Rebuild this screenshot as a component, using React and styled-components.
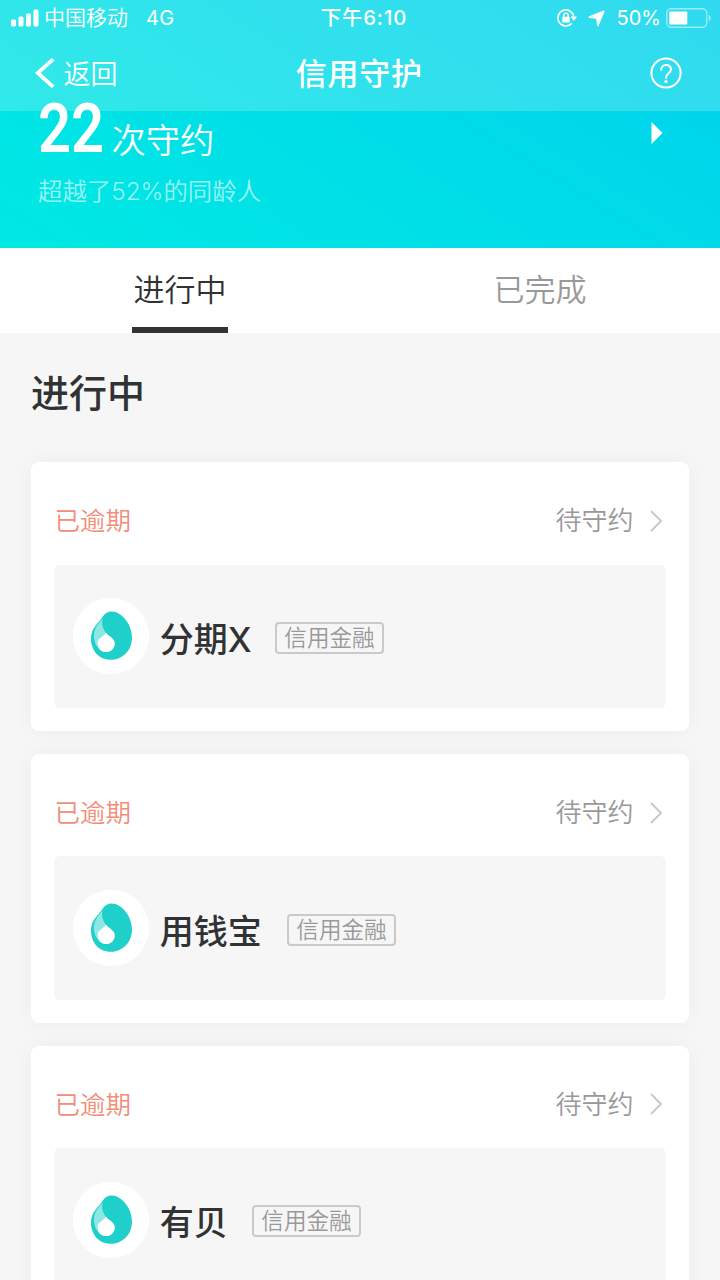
import React from 'react';
import styled, { createGlobalStyle } from 'styled-components';

const GlobalStyle = createGlobalStyle`
  * { box-sizing: border-box; }
  body {
    margin: 0;
    background: #f6f6f6;
    font-family: 'Noto Sans CJK SC', sans-serif;
    color: #303233;
  }
`;

const Screen = styled.div`
  width: 720px;
  height: 1280px;
  overflow: hidden;
  background: #f6f6f6;
`;

const Hero = styled.header`
  height: 248px;
  color: #fff;
  background: linear-gradient(32deg, #00e9e3 0%, #00dde8 50%, #00d1ec 100%);
`;

const TopBar = styled.div`
  height: 111px;
  background: rgba(255, 255, 255, 0.19);
`;

const StatusBar = styled.div`
  display: grid;
  grid-template-columns: 1fr auto 1fr;
  align-items: center;
  height: 36px;
  padding: 0 9px 0 11px;
`;

const StatusGroup = styled.div`
  display: flex;
  align-items: center;
  justify-content: ${(p) => (p.$end ? 'flex-end' : 'flex-start')};
`;

const StatusText = styled.span`
  margin-left: ${(p) => p.$gap || 0}px;
  font-family: Inter, 'Noto Sans CJK SC', sans-serif;
  font-size: ${(p) => p.$size || 20}px;
  font-weight: ${(p) => p.$weight || 400};
  letter-spacing: ${(p) => p.$tracking || 0}px;
  line-height: 36px;
  white-space: nowrap;
`;

const Clock = styled(StatusText)`
  padding-left: 6px;
`;

const LocationArrow = styled.svg`
  margin-left: 11px;
`;

const Battery = styled.svg`
  margin-left: 5px;
`;

const NavBar = styled.nav`
  display: grid;
  grid-template-columns: 1fr auto 1fr;
  align-items: center;
  height: 73px;
  padding: 0 38.5px 0 35px;
`;

const Back = styled.div`
  display: flex;
  align-items: center;
  gap: 8.5px;
  font-size: 27px;
  font-weight: 350;
  line-height: 73px;
`;

const NavTitle = styled.h1`
  margin: 0;
  padding-left: 2px;
  font-size: 31px;
  font-weight: 500;
  letter-spacing: 0.8px;
  line-height: 70px;
  height: 71px;
`;

const Help = styled.svg`
  justify-self: end;
`;

const Summary = styled.section`
  display: flex;
  justify-content: space-between;
  margin-top: -12px;
  padding: 0 57px 0 38px;
`;

const CountLine = styled.div`
  display: flex;
  height: 67px;
`;

const Count = styled.span`
  width: 73.5px;
  font-family: Roboto, sans-serif;
  font-size: 69px;
  font-weight: 600;
  line-height: 60px;
  transform: scaleX(0.84);
  transform-origin: left;
`;

const CountUnit = styled.span`
  font-size: 34.3px;
  font-weight: 350;
  line-height: 79px;
`;

const Compare = styled.p`
  margin: 0;
  font-family: Inter, 'Noto Sans CJK SC', sans-serif;
  font-size: 24.4px;
  font-weight: 350;
  line-height: 50px;
  color: rgba(255, 255, 255, 0.6);
`;

const Play = styled.svg`
  margin-top: 23px;
`;

const Tabs = styled.div`
  display: grid;
  grid-template-columns: 1fr 1fr;
  justify-items: center;
  height: 85px;
  background: #fff;
`;

const Tab = styled.div`
  width: 96px;
  height: 85px;
  border-bottom: 6px solid ${(p) => (p.$active ? '#303233' : 'transparent')};
  font-size: 31px;
  font-weight: 350;
  line-height: 80px;
  text-align: center;
  white-space: nowrap;
  color: ${(p) => (p.$active ? '#303233' : '#999')};
`;

const Heading = styled.h2`
  margin: 0;
  padding-left: 31px;
  font-size: 38px;
  font-weight: 500;
  line-height: 116px;
  height: 129.4px;
`;

const List = styled.main`
  display: flex;
  flex-direction: column;
  gap: 22.7px;
  padding: 0 31px;
`;

const Card = styled.article`
  height: 269px;
  flex: none;
  padding: 0 23.4px;
  border-radius: 8px;
  background: #fff;
  box-shadow: 0 0 20px rgba(0, 0, 0, 0.045);
`;

const CardHead = styled.div`
  display: flex;
  align-items: center;
  height: 102.2px;
  padding-top: 12px;
  line-height: 40px;
`;

const Overdue = styled.span`
  flex: 1;
  font-size: 25.5px;
  font-weight: 350;
  color: #f28d78;
`;

const Pending = styled.span`
  font-size: 26px;
  font-weight: 350;
  color: #999;
`;

const Chevron = styled.svg`
  margin: 3px 3px 0 15px;
`;

const Merchant = styled.div`
  display: flex;
  align-items: center;
  height: 143.5px;
  padding-left: 17.8px;
  border-radius: 6px;
  background: #f6f6f6;
`;

const Logo = styled.svg`
  flex: none;
`;

const Name = styled.span`
  margin: 3px 0 0 9.6px;
  width: ${(p) => p.$width}px;
  font-size: 34px;
  font-weight: 500;
  line-height: 50px;
  white-space: nowrap;
`;

const Latin = styled.span`
  font-family: Inter, sans-serif;
  line-height: 1;
`;

const Tag = styled.span`
  width: 109.5px;
  height: 32px;
  margin-top: 3px;
  border: 2px solid #cacaca;
  border-radius: 4px;
  font-size: 22.6px;
  font-weight: 350;
  line-height: 26px;
  text-align: center;
  white-space: nowrap;
  color: #999;
`;

const items = [
  { name: '分期', latin: 'X', width: 115 },
  { name: '用钱宝', width: 127 },
  { name: '有贝', width: 92 },
];

function DropLogo() {
  return (
    <Logo width="78" height="78" viewBox="0 0 78 78">
      <circle cx="39" cy="39" r="38.2" fill="#fff" />
      <path d="M39.7 14.6C49.5 14.6 60 27 60 40.5C60 54 50 62.8 38.7 62.8C27 62.8 19 53.5 19 41.5C19 31.5 26 26.5 30 20.8C32.5 17 35 14.6 39.7 14.6Z" fill="#1fcfc9" />
      <path d="M30.4 21.6C29.4 29 31.5 32.5 34.2 36.4C32.5 40.4 26 41 25.4 46.5C25.2 48.5 25.8 50 26.7 51.4C22.5 47.5 21 39.5 22.5 34C23.8 29.5 27.2 25.5 30.4 21.6Z" fill="#8ce8e5" />
      <path d="M34 35.6C36.7 39.7 42.8 41.3 42.8 46.4C42.8 51.3 38.9 55 34.1 55C29.3 55 25.4 51.3 25.4 46.4C25.4 41.3 31.4 40 34 35.6Z" fill="#fff" />
    </Logo>
  );
}

function CommitmentCard({ name, latin, width }) {
  return (
    <Card>
      <CardHead>
        <Overdue>已逾期</Overdue>
        <Pending>待守约</Pending>
        <Chevron width="14" height="22" viewBox="0 0 14 22" fill="none" stroke="#c9c9c9" strokeWidth="2">
          <path d="M2 1L12 11L2 21" />
        </Chevron>
      </CardHead>
      <Merchant>
        <DropLogo />
        <Name $width={width}>{name}{latin && <Latin>{latin}</Latin>}</Name>
        <Tag>信用金融</Tag>
      </Merchant>
    </Card>
  );
}

export default function App() {
  return (
    <Screen>
      <GlobalStyle />
      <Hero>
        <TopBar>
          <StatusBar>
            <StatusGroup>
              <svg width="28" height="18" viewBox="0 0 28 18" fill="#fff">
                <rect x="0" y="10.5" width="5" height="7" rx="1.5" />
                <rect x="7.5" y="7.5" width="5" height="10" rx="1.5" />
                <rect x="15" y="4.5" width="5" height="13" rx="1.5" />
                <rect x="22.5" y="0.5" width="5" height="17" rx="1.5" />
              </svg>
              <StatusText $gap={5} $size={21} $weight={350}>中国移动</StatusText>
              <StatusText $gap={18} $tracking={0.3}>4G</StatusText>
            </StatusGroup>
            <Clock $weight={500} $size={20.3} $tracking={0.9}>下午6:10</Clock>
            <StatusGroup $end>
              <svg width="20" height="18" viewBox="0 0 20 18" fill="none" stroke="#fff" strokeWidth="1.6">
                <path d="M14.8 14.4A8 8 0 1 1 16.8 7.5" />
                <path d="M13.6 7.6H20L16.8 12Z" fill="#fff" stroke="none" />
                <rect x="5.3" y="7.8" width="7.4" height="5.6" rx="0.6" fill="#fff" stroke="none" />
                <path d="M6.8 8V6.3A2.2 2.2 0 0 1 11.2 6.3V8" strokeWidth="1.4" />
              </svg>
              <LocationArrow width="17" height="17" viewBox="0 0 17 17" fill="#fff">
                <path d="M15.7 0.5L1 6.3Q0 7 1.2 7.9L8.2 8.7L9.2 15.8Q9.8 17 10.6 15.8L16.6 1.4Q16.8 0.2 15.7 0.5Z" />
              </LocationArrow>
              <StatusText $gap={12}>50%</StatusText>
              <Battery width="45" height="20" viewBox="0 0 45 20" fill="none">
                <rect x="0.8" y="0.8" width="40" height="18.4" rx="4.5" stroke="#fff" strokeOpacity="0.5" strokeWidth="1.4" />
                <rect x="3.3" y="3.4" width="18" height="13.2" rx="1.2" fill="#fff" />
                <path d="M42.8 6.8Q44.8 8 44.8 10T42.8 13.2Z" fill="#fff" fillOpacity="0.55" />
              </Battery>
            </StatusGroup>
          </StatusBar>
          <NavBar>
            <Back>
              <svg width="20" height="30" viewBox="0 0 20 30" fill="none" stroke="#fff" strokeWidth="3.8">
                <path d="M18.2 1.2L2.8 15L18.2 28.8" />
              </svg>
              返回
            </Back>
            <NavTitle>信用守护</NavTitle>
            <Help width="32" height="32" viewBox="0 0 32 32" fill="none" stroke="#fff" strokeWidth="2">
              <circle cx="16" cy="16" r="14.6" />
              <path d="M11.2 12.8C11.2 6.4 21 6.4 21 12.6C21 16 16 16.4 16 21" strokeLinecap="round" />
              <circle cx="16" cy="24.6" r="1.6" fill="#fff" stroke="none" />
            </Help>
          </NavBar>
        </TopBar>
        <Summary>
          <div>
            <CountLine>
              <Count>22</Count>
              <CountUnit>次守约</CountUnit>
            </CountLine>
            <Compare>超越了52%的同龄人</Compare>
          </div>
          <Play width="12" height="22" viewBox="0 0 12 22" fill="#fff">
            <path d="M0.5 0L11.5 11L0.5 22Z" />
          </Play>
        </Summary>
      </Hero>
      <Tabs>
        <Tab $active>进行中</Tab>
        <Tab>已完成</Tab>
      </Tabs>
      <Heading>进行中</Heading>
      <List>
        {items.map((item) => (
          <CommitmentCard key={item.name} {...item} />
        ))}
      </List>
    </Screen>
  );
}
